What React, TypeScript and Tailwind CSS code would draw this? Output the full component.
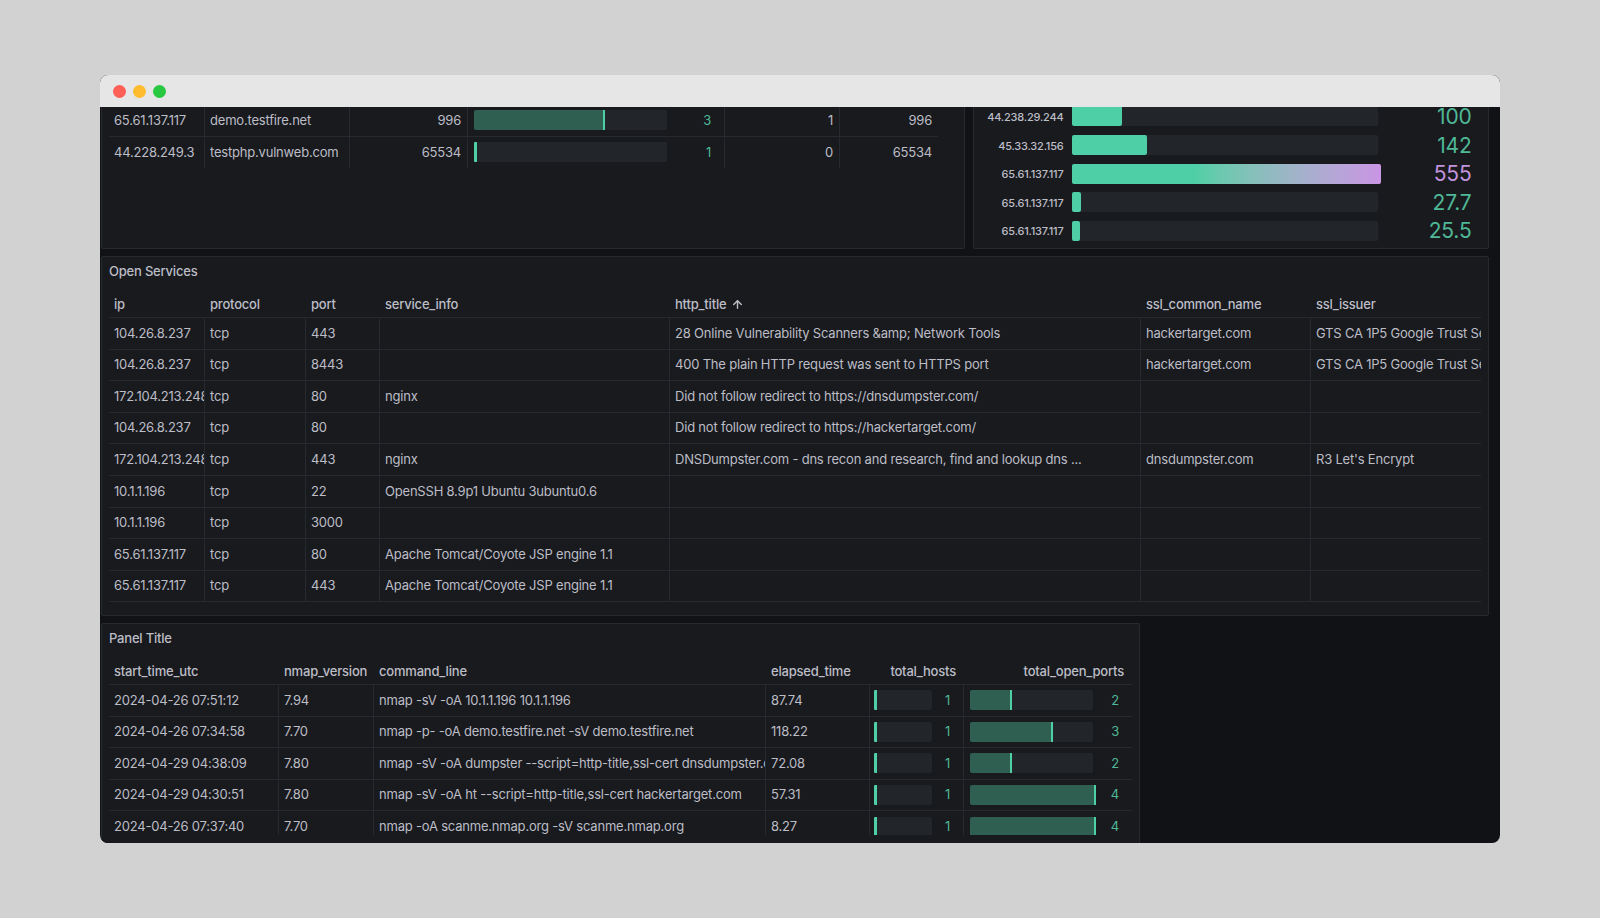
import { ArrowUp } from "lucide-react";

type Bar = { value: string; pct: number; track: number; tight?: boolean };
type Cell = string | Bar;

function BarCell({ value, pct, track, tight }: Bar) {
  return (
    <div className={tight ? "flex h-full items-center pl-[4px]" : "flex h-full items-center pl-[5.5px]"}>
      <div className="relative h-[20px] rounded-[2px] bg-[#22252a]" style={{ width: track }}>
        <div
          className={
            pct > 3
              ? "absolute left-0 top-0 h-full rounded-l-[2px] border-r-2 border-[#4fcfa5] bg-[#2e5f50]"
              : "absolute left-0 top-0 h-full rounded-l-[1px] bg-[#4fcfa5]"
          }
          style={{ width: pct }}
        />
      </div>
      <span className="ml-auto pr-[13px] text-[#4fb896]">{value}</span>
    </div>
  );
}

function Row({ cols, cells, aligns, last }: { cols: number[]; cells: Cell[]; aligns?: string[]; last?: boolean }) {
  return (
    <div className={last ? "flex h-[31.6px]" : "flex h-[31.6px] border-b border-[#26292e]"}>
      {cells.map((c, i) => (
        <div
          key={i}
          style={{ width: cols[i] }}
          className={
            i < cells.length - 1
              ? "shrink-0 overflow-hidden whitespace-nowrap border-r border-[#26292e]"
              : "shrink-0 overflow-hidden whitespace-nowrap"
          }
        >
          {typeof c === "string" ? (
            <div
              className={
                aligns && aligns[i] === "r"
                  ? "flex h-full items-center justify-end pr-[6px]"
                  : "flex h-full items-center pl-[5px]"
              }
            >
              {c}
            </div>
          ) : (
            <BarCell {...c} />
          )}
        </div>
      ))}
    </div>
  );
}

function Header({ cols, labels, aligns }: { cols: number[]; labels: string[]; aligns?: string[] }) {
  return (
    <div className="flex h-[26px] items-center border-b border-[#26292e] font-medium">
      {labels.map((l, i) => (
        <div
          key={l}
          style={{ width: cols[i] }}
          className={
            aligns && aligns[i] === "r"
              ? "flex shrink-0 items-center justify-end whitespace-nowrap pr-[8px]"
              : "flex shrink-0 items-center whitespace-nowrap pl-[5px]"
          }
        >
          {l}
          {l === "http_title" && <ArrowUp className="ml-[5px] h-[13px] w-[13px]" strokeWidth={2.6} />}
        </div>
      ))}
    </div>
  );
}

const hostCols = [96, 145, 118, 257, 115, 98];
const hostAligns = ["l", "l", "r", "l", "r", "r"];
const hostRows: Cell[][] = [
  ["65.61.137.117", "demo.testfire.net", "996", { value: "3", pct: 131, track: 193 }, "1", "996"],
  ["44.228.249.3", "testphp.vulnweb.com", "65534", { value: "1", pct: 3, track: 193 }, "0", "65534"],
];

const gauges = [
  { ip: "44.238.29.244", value: "100", pct: 50 },
  { ip: "45.33.32.156", value: "142", pct: 75 },
  { ip: "65.61.137.117", value: "555", pct: 309, top: true },
  { ip: "65.61.137.117", value: "27.7", pct: 9 },
  { ip: "65.61.137.117", value: "25.5", pct: 8 },
];

const serviceCols = [96, 101, 74, 290, 471, 170, 170];
const serviceHead = ["ip", "protocol", "port", "service_info", "http_title", "ssl_common_name", "ssl_issuer"];
const gts = "GTS CA 1P5 Google Trust Services";
const services = [
  ["104.26.8.237", "tcp", "443", "", "28 Online Vulnerability Scanners &amp; Network Tools", "hackertarget.com", gts],
  ["104.26.8.237", "tcp", "8443", "", "400 The plain HTTP request was sent to HTTPS port", "hackertarget.com", gts],
  ["172.104.213.248", "tcp", "80", "nginx", "Did not follow redirect to https://dnsdumpster.com/", "", ""],
  ["104.26.8.237", "tcp", "80", "", "Did not follow redirect to https://hackertarget.com/", "", ""],
  ["172.104.213.248", "tcp", "443", "nginx", "DNSDumpster.com - dns recon and research, find and lookup dns ...", "dnsdumpster.com", "R3 Let's Encrypt"],
  ["10.1.1.196", "tcp", "22", "OpenSSH 8.9p1 Ubuntu 3ubuntu0.6", "", "", ""],
  ["10.1.1.196", "tcp", "3000", "", "", "", ""],
  ["65.61.137.117", "tcp", "80", "Apache Tomcat/Coyote JSP engine 1.1", "", "", ""],
  ["65.61.137.117", "tcp", "443", "Apache Tomcat/Coyote JSP engine 1.1", "", "", ""],
];

const scanCols = [170, 95, 392, 104, 94, 168];
const scanHead = ["start_time_utc", "nmap_version", "command_line", "elapsed_time", "total_hosts", "total_open_ports"];
const scanHeadAligns = ["l", "l", "l", "l", "r", "r"];
const host1 = { value: "1", pct: 3, track: 58, tight: true };
const scans: Cell[][] = [
  ["2024-04-26 07:51:12", "7.94", "nmap -sV -oA 10.1.1.196 10.1.1.196", "87.74", host1, { value: "2", pct: 42, track: 123 }],
  ["2024-04-26 07:34:58", "7.70", "nmap -p- -oA demo.testfire.net -sV demo.testfire.net", "118.22", host1, { value: "3", pct: 83, track: 123 }],
  ["2024-04-29 04:38:09", "7.80", "nmap -sV -oA dumpster --script=http-title,ssl-cert dnsdumpster.com", "72.08", host1, { value: "2", pct: 42, track: 123 }],
  ["2024-04-29 04:30:51", "7.80", "nmap -sV -oA ht --script=http-title,ssl-cert hackertarget.com", "57.31", host1, { value: "4", pct: 126, track: 123 }],
  ["2024-04-26 07:37:40", "7.70", "nmap -oA scanme.nmap.org -sV scanme.nmap.org", "8.27", host1, { value: "4", pct: 126, track: 123 }],
];

export default function App() {
  return (
    <div className="h-[918px] overflow-hidden bg-[#d2d2d2] pl-[100px] pt-[75px] font-['Inter',sans-serif] text-[13px] tracking-[-0.2px] text-[#bdbdc6]">
      <div className="flex h-[768px] w-[1400px] flex-col overflow-hidden rounded-lg bg-[#101215]">
        <div className="flex h-[32px] shrink-0 items-center gap-[7px] bg-[#e6e6e6] pl-[13px] pt-[1px]">
          <span className="h-[13px] w-[13px] rounded-full bg-[#ff5f57]" />
          <span className="h-[13px] w-[13px] rounded-full bg-[#febc2e]" />
          <span className="h-[13px] w-[13px] rounded-full bg-[#28c840]" />
        </div>

        <div className="flex min-h-0 flex-1 flex-col gap-[7px] pl-px">
          <div className="flex h-[142px] shrink-0 gap-[7.5px]">
            <div className="w-[864px] overflow-hidden rounded-b-[2px] border border-t-0 border-[#26292e] bg-[#181a1e] pl-[7px]">
              <div className="-mt-[2px] w-[829px]">
                {hostRows.map((r, i) => (
                  <Row key={i} cols={hostCols} cells={r} aligns={hostAligns} last={i === hostRows.length - 1} />
                ))}
              </div>
            </div>
            <div className="w-[516px] overflow-hidden rounded-b-[2px] border border-t-0 border-[#26292e] bg-[#181a1e]">
              <div className="-mt-[0.6px] flex flex-col gap-[8.6px]">
                {gauges.map((g, i) => (
                  <div key={i} className="flex h-[20px] items-center">
                    <span className="w-[90px] shrink-0 pt-[2px] text-right text-[11px] font-medium leading-none">{g.ip}</span>
                    <div className="relative ml-[8px] h-[20px] w-[306px] shrink-0 rounded-[2px] bg-[#22252a]">
                      {g.top ? (
                        <div
                          className="absolute left-0 top-0 h-full rounded-[2px] bg-gradient-to-r from-[#4fcfa5] from-40% to-[#ca95e5]"
                          style={{ width: g.pct }}
                        />
                      ) : (
                        <div className="absolute left-0 top-0 h-full rounded-[2px] bg-[#4fcfa5]" style={{ width: g.pct }} />
                      )}
                    </div>
                    <span
                      className={
                        g.top
                          ? "ml-auto pr-[16px] text-[21px] leading-none text-[#c193dc]"
                          : "ml-auto pr-[16px] text-[21px] leading-none text-[#4fb896]"
                      }
                    >
                      {g.value}
                    </span>
                  </div>
                ))}
              </div>
            </div>
          </div>

          <div className="h-[360px] w-[1388px] shrink-0 rounded-[2px] border border-[#26292e] bg-[#181a1e] pl-[7px]">
            <div className="flex h-[29px] items-center font-medium">Open Services</div>
            <div className="mt-[6px] w-[1372px]">
              <Header cols={serviceCols} labels={serviceHead} />
              {services.map((r, i) => (
                <Row key={i} cols={serviceCols} cells={r} />
              ))}
            </div>
          </div>

          <div className="min-h-0 w-[1039px] flex-1 rounded-t-[2px] border border-b-0 border-[#26292e] bg-[#181a1e] pl-[7px]">
            <div className="flex h-[29px] items-center font-medium">Panel Title</div>
            <div className="mt-[6px] h-[176px] w-[1023px] overflow-hidden">
              <Header cols={scanCols} labels={scanHead} aligns={scanHeadAligns} />
              {scans.map((r, i) => (
                <Row key={i} cols={scanCols} cells={r} last={i === scans.length - 1} />
              ))}
            </div>
          </div>
        </div>
      </div>
    </div>
  );
}
